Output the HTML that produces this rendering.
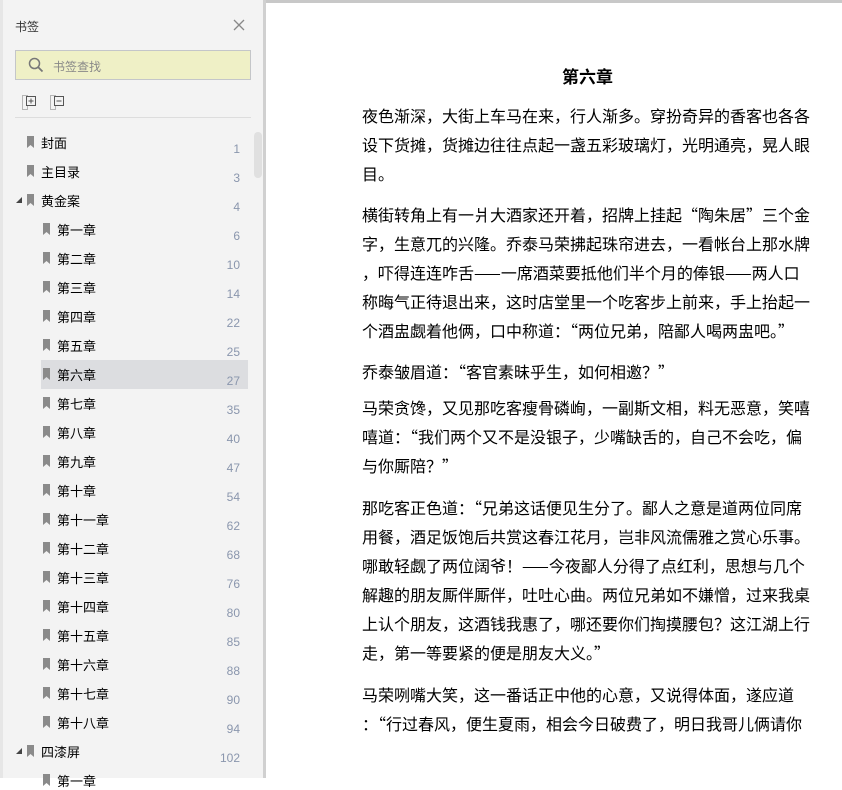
<!DOCTYPE html>
<html><head><meta charset="utf-8"><style>
*{margin:0;padding:0;box-sizing:border-box}
body{width:842px;height:778px;overflow:hidden;background:#fff;font-family:"Liberation Sans","Noto Sans CJK SC",sans-serif;position:relative}
.side{position:absolute;left:0;top:0;width:263px;height:778px;background:#f3f3f3;border-left:3px solid #e6e6e6}
.vb{position:absolute;left:263px;top:0;width:3px;height:778px;background:#d0d0d0}
.topb{position:absolute;left:266px;top:0;width:576px;height:3px;background:#c8c8c8}
.t{position:absolute;font-size:13px;color:#000;white-space:nowrap}
.n{position:absolute;font-size:12px;color:#8a96ad;width:40px;text-align:right}
.bm{position:absolute;width:7px;height:12px;background:#8a8a8a;clip-path:polygon(0 0,100% 0,100% 100%,50% 75%,0 100%)}
.tri{position:absolute;width:0;height:0;border-left:6px solid transparent;border-bottom:6px solid #444}
.l{position:absolute;left:362px;font-size:16px;line-height:22px;white-space:nowrap;color:#000;font-family:"Noto Sans CJK SC","Liberation Sans",sans-serif}
</style></head><body>
<div class="side"></div><div class="vb"></div><div class="topb"></div>
<div class="t" style="left:15px;top:18px;color:#333;font-size:12px">书签</div>
<svg style="position:absolute;left:233px;top:19px" width="12" height="12"><path d="M1 1L11 11M11 1L1 11" stroke="#888" stroke-width="1.3"/></svg>
<div style="position:absolute;left:15px;top:50px;width:236px;height:30px;background:#eff0c6;border:1px solid #c4c6c9"></div>
<svg style="position:absolute;left:28px;top:57px" width="16" height="16"><circle cx="6.5" cy="6.5" r="5" fill="none" stroke="#777" stroke-width="1.5"/><path d="M10 10L14.5 14.5" stroke="#777" stroke-width="1.8"/></svg>
<div class="t" style="left:53px;top:58px;color:#888;font-size:12px">书签查找</div>
<svg style="position:absolute;left:22px;top:95px" width="16" height="16"><rect x="0.5" y="0.5" width="5" height="14" fill="none" stroke="#777" stroke-dasharray="1,1"/><rect x="4.5" y="1.5" width="9" height="9" fill="#f3f3f3" stroke="#555"/><path d="M9 3.5v5M6.5 6h5" stroke="#555"/></svg>
<svg style="position:absolute;left:50px;top:95px" width="16" height="16"><rect x="0.5" y="0.5" width="5" height="14" fill="none" stroke="#777" stroke-dasharray="1,1"/><rect x="4.5" y="1.5" width="9" height="9" fill="#f3f3f3" stroke="#555"/><path d="M6.5 6h5" stroke="#555"/></svg>
<div style="position:absolute;left:15px;top:117px;width:236px;height:1px;background:#ddd"></div>
<div style="position:absolute;left:254px;top:132px;width:8px;height:46px;background:#e0e0e0;border-radius:4px"></div>
<div style="position:absolute;left:41px;top:360px;width:207px;height:29px;background:#dcdde0"></div>
<div id="list"></div>
<div style="position:absolute;left:562px;top:63px;font-size:17px;font-weight:bold;font-family:'Noto Sans CJK SC',sans-serif">第六章</div>
<div id="txt"></div>
<script>
var items=[[1,"封面","1"],[1,"主目录","3"],[0,"黄金案","4"],[2,"第一章","6"],[2,"第二章","10"],[2,"第三章","14"],[2,"第四章","22"],[2,"第五章","25"],[2,"第六章","27"],[2,"第七章","35"],[2,"第八章","40"],[2,"第九章","47"],[2,"第十章","54"],[2,"第十一章","62"],[2,"第十二章","68"],[2,"第十三章","76"],[2,"第十四章","80"],[2,"第十五章","85"],[2,"第十六章","88"],[2,"第十七章","90"],[2,"第十八章","94"],[0,"四漆屏","102"],[2,"第一章",""]];
var h="";items.forEach(function(it,i){var y=142+29*i;var ix=it[0]==2?43:27,tx=it[0]==2?57:41;
if(it[0]==0)h+='<div class="tri" style="left:16px;top:'+(y-3)+'px"></div>';
h+='<div class="bm" style="left:'+ix+'px;top:'+(y-6)+'px"></div><div class="t" style="left:'+tx+'px;top:'+(y-9)+'px">'+it[1]+'</div><div class="n" style="left:200px;top:'+(y-0)+'px">'+it[2]+'</div>';});
document.getElementById("list").innerHTML=h;
var L=[[115,"夜色渐深，大街上车马在来，行人渐多。穿扮奇异的香客也各各"],[144,"设下货摊，货摊边往往点起一盏五彩玻璃灯，光明通亮，晃人眼"],[173,"目。"],[214,"横街转角上有一爿大酒家还开着，招牌上挂起“陶朱居”三个金"],[243,"字，生意兀的兴隆。乔泰马荣拂起珠帘进去，一看帐台上那水牌"],[272,"，吓得连连咋舌——一席酒菜要抵他们半个月的俸银——两人口"],[301,"称晦气正待退出来，这时店堂里一个吃客步上前来，手上抬起一"],[330,"个酒盅觑着他俩，口中称道：“两位兄弟，陪鄙人喝两盅吧。”"],[371,"乔泰皱眉道：“客官素昧乎生，如何相邀？”"],[407,"马荣贪馋，又见那吃客瘦骨磷峋，一副斯文相，料无恶意，笑嘻"],[436,"嘻道：“我们两个又不是没银子，少嘴缺舌的，自己不会吃，偏"],[465,"与你厮陪？”"],[507,"那吃客正色道：“兄弟这话便见生分了。鄙人之意是道两位同席"],[536,"用餐，酒足饭饱后共赏这春江花月，岂非风流儒雅之赏心乐事。"],[565,"哪敢轻觑了两位阔爷！——今夜鄙人分得了点红利，思想与几个"],[594,"解趣的朋友厮伴厮伴，吐吐心曲。两位兄弟如不嫌憎，过来我桌"],[623,"上认个朋友，这酒钱我惠了，哪还要你们掏摸腰包？这江湖上行"],[652,"走，第一等要紧的便是朋友大义。”"],[694,"马荣咧嘴大笑，这一番话正中他的心意，又说得体面，遂应道"],[723,"：“行过春风，便生夏雨，相会今日破费了，明日我哥儿俩请你"]];
var s="";L.forEach(function(a){s+='<div class="l" style="top:'+(a[0]-11)+'px">'+a[1]+'</div>';});
document.getElementById("txt").innerHTML=s;
</script>
</body></html>
